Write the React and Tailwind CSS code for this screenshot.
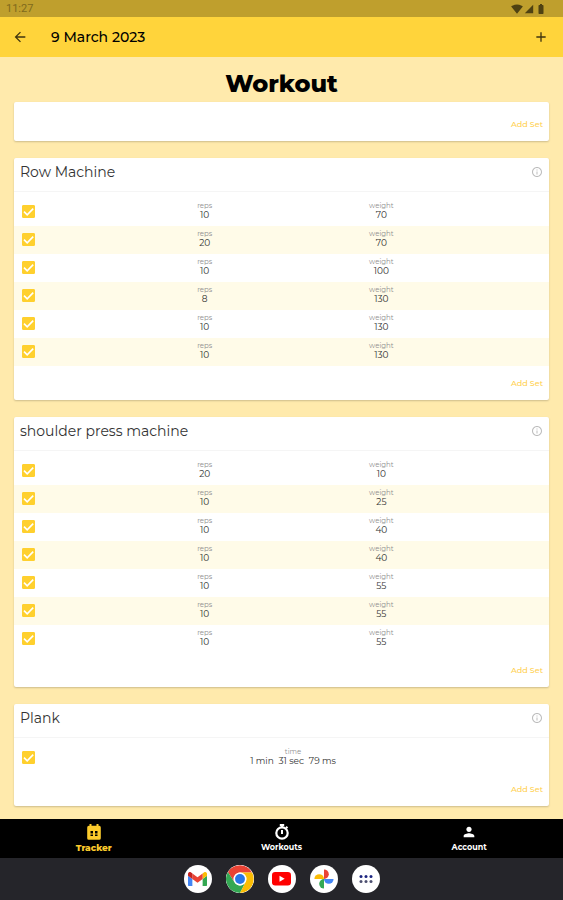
import {useState} from "react";
import {
    MdAdd,
    MdArrowBack,
    MdBatteryFull,
    MdInfoOutline,
    MdPerson,
    MdSignalCellular4Bar,
    MdSignalWifi4Bar,
} from "react-icons/md";

const rowMachineSets = [
    {reps: 10, weight: 70},
    {reps: 20, weight: 70},
    {reps: 10, weight: 100},
    {reps: 8, weight: 130},
    {reps: 10, weight: 130},
    {reps: 10, weight: 130},
];

const shoulderPressSets = [
    {reps: 20, weight: 10},
    {reps: 10, weight: 25},
    {reps: 10, weight: 40},
    {reps: 10, weight: 40},
    {reps: 10, weight: 55},
    {reps: 10, weight: 55},
    {reps: 10, weight: 55},
];

const plankSets = [{time: "1 min  31 sec  79 ms"}];

const StatusBar = () => (
    <div className="flex h-[17px] items-center justify-between bg-[#bf9f2d] pl-1.5 pr-4 text-[#4f4212]">
        <span className="font-['Roboto',sans-serif] text-[11px] leading-4 text-[#806a1c]">11:27</span>
        <div className="flex items-center gap-px">
            <MdSignalWifi4Bar className="size-3"/>
            <MdSignalCellular4Bar className="size-2.5"/>
            <MdBatteryFull className="size-3"/>
        </div>
    </div>
);

const Header = () => (
    <header className="flex h-10 items-center bg-[#ffd43b] px-3 text-black">
        <button type="button" aria-label="Back" className="flex size-4 items-center justify-center">
            <MdArrowBack className="size-4 opacity-75"/>
        </button>
        <div className="ml-[23px] flex-1 text-sm font-medium leading-5">9 March 2023</div>
        <button type="button" aria-label="Add exercise" className="mr-0.5 flex size-4 items-center justify-center">
            <MdAdd className="size-4 opacity-75"/>
        </button>
    </header>
);

const AddSet = () => (
    <div className="flex h-[34px] items-center justify-end px-1.5">
        <button type="button" className="text-[8px] font-medium leading-3 text-[#ffcf4d]">Add Set</button>
    </div>
);

const SetRow = ({set, name}) => {
    const [done, setDone] = useState(true);

    return (
        <li className="grid h-7 grid-cols-[102fr_352fr_79fr] items-center pb-0.5 even:bg-[#fffbe8]">
            <div className="relative ml-2 size-[13px]">
                <input
                    type="checkbox"
                    aria-label={name}
                    checked={done}
                    onChange={(e) => setDone(e.target.checked)}
                    className="peer block size-[13px] appearance-none rounded-[1px] border border-[#ffd02e] checked:bg-[#ffd02e]"
                />
                <svg viewBox="0 0 13 13" className="pointer-events-none absolute inset-0 hidden size-[13px] peer-checked:block">
                    <path d="M2 6.600l3.200 3.200 6-6.200" fill="none" stroke="#fff" strokeWidth="1.600"/>
                </svg>
            </div>
            <div className="flex">
                {
                    Object.entries(set).map(([label, value]) => (
                        <div key={label} className="flex-1 text-center">
                            <div className="text-[7px] leading-2 text-[#8f8f8f]">{label}</div>
                            <div className="whitespace-pre text-[9px] leading-[10px] text-[#333333]">{value}</div>
                        </div>
                    ))
                }
            </div>
        </li>
    );
};

const ExerciseCard = ({title, sets}) => (
    <section className="rounded-xs bg-white shadow-[0_1px_2px_rgba(0,0,0,0.2)]">
        <div className="flex h-[34px] items-start justify-between border-b border-[#f5f5f5] px-1.5 pt-1">
            <h2 className="text-sm leading-5 text-[#333333]">{title}</h2>
            <button type="button" aria-label={`About ${title}`} className="mt-1">
                <MdInfoOutline className="size-3 text-[#bdbdbd]"/>
            </button>
        </div>
        <ul className="pt-1.5">
            {
                sets.map((set, i) => (
                    <SetRow key={i} set={set} name={`${title} set ${i + 1}`}/>
                ))
            }
        </ul>
        <AddSet/>
    </section>
);

const CalendarIcon = () => (
    <svg viewBox="0 0 16 16" className="size-4" fill="currentColor">
        <path fillRule="evenodd" d="M3.500 0h2v1.800h5V0h2v1.800h.7a1.600 1.600 0 0 1 1.600 1.600v10.800a1.600 1.600 0 0 1-1.600 1.600H2.800a1.600 1.600 0 0 1-1.600-1.600V3.400a1.600 1.600 0 0 1 1.600-1.600h.7zM4.500 7v2.500H7V7zm4.500 0v2.500h2.500V7zM4.500 10.500V12H7v-1.500zm4.500 0V12h2.500v-1.500z"/>
    </svg>
);

const StopwatchIcon = () => (
    <svg viewBox="0 0 16 16" className="size-4" fill="none" stroke="currentColor">
        <circle cx="8" cy="9" r="5.700" strokeWidth="2.200"/>
        <path d="M5.800 1.200h4.400M8 1v2.500M12 4l1.500-1.200" strokeWidth="2.200"/>
        <path d="M8 6v4" strokeWidth="2"/>
    </svg>
);

const NavLink = ({label, active, children}) => (
    <a
        href="#"
        className={`${active ? "text-[9px] font-extrabold text-[#fccb2c]" : "text-[8px] font-bold text-white"} flex flex-1 flex-col items-center pt-[5px] leading-[15px]`}
    >
        {children}
        {label}
    </a>
);

const DockButton = ({label, children}) => (
    <button type="button" aria-label={label} className="flex size-7 items-center justify-center overflow-hidden rounded-full bg-white">
        {children}
    </button>
);

const Dock = () => (
    <div className="flex h-[42px] items-center justify-center gap-3.5 bg-[#25252a]">
        <DockButton label="Gmail">
            <svg viewBox="0 0 24 18" className="w-[19px]">
                <path fill="#4285f4" d="M1.600 18h3.900V8.700L0 4.600v11.800A1.600 1.600 0 0 0 1.600 18z"/>
                <path fill="#34a853" d="M18.500 18h3.900a1.600 1.600 0 0 0 1.600-1.600V4.600l-5.500 4.100z"/>
                <path fill="#fbbc04" d="M18.500 1.800v6.900L24 4.600V2.400C24 .4 21.700-.8 20 .5z"/>
                <path fill="#ea4335" d="M5.500 8.700V1.800L12 6.600l6.500-4.800v6.900L12 13.600z"/>
                <path fill="#c5221f" d="M0 2.400v2.200l5.500 4.100V1.800L4 .5C2.300-.8 0 .4 0 2.400z"/>
            </svg>
        </DockButton>
        <DockButton label="Chrome">
            <svg viewBox="0 0 48 48" className="size-7">
                <circle cx="24" cy="24" r="24" fill="#fff"/>
                <path fill="#ea4335" d="M24 13h20.800A24 24 0 0 0 3.200 12l11.300 17.500A11 11 0 0 1 24 13z"/>
                <path fill="#34a853" d="M14.500 29.500 3.200 12A24 24 0 0 0 24 48l9.500-18.500a11 11 0 0 1-19 0z"/>
                <path fill="#fbbc04" d="M33.500 29.500 24 48A24 24 0 0 0 44.800 13H24a11 11 0 0 1 9.500 16.500z"/>
                <circle cx="24" cy="24" r="11" fill="#fff"/>
                <circle cx="24" cy="24" r="8.500" fill="#2877e8"/>
            </svg>
        </DockButton>
        <DockButton label="YouTube">
            <svg viewBox="0 0 24 17" className="w-[19px]">
                <rect width="24" height="17" rx="4" fill="#f00"/>
                <path d="M9.500 4.800v7.400l6.500-3.700z" fill="#fff"/>
            </svg>
        </DockButton>
        <DockButton label="Photos">
            <svg viewBox="0 0 24 24" className="size-5">
                <path fill="#ea4335" d="M12 .5a5.750 5.750 0 0 1 0 11.500z"/>
                <path fill="#4285f4" d="M23.500 12a5.750 5.750 0 0 1-11.500 0z"/>
                <path fill="#34a853" d="M12 23.500a5.750 5.750 0 0 1 0-11.500z"/>
                <path fill="#fbbc04" d="M.5 12a5.750 5.750 0 0 1 11.500 0z"/>
            </svg>
        </DockButton>
        <DockButton label="All apps">
            <svg viewBox="0 0 14 10" className="w-3.5">
                <g fill="#1c2480">
                    <circle cx="2" cy="2.500" r="1.500"/>
                    <circle cx="7" cy="2.500" r="1.500"/>
                    <circle cx="12" cy="2.500" r="1.500"/>
                </g>
                <g fill="#4c4f70">
                    <circle cx="2" cy="7.500" r="1.500"/>
                    <circle cx="7" cy="7.500" r="1.500"/>
                    <circle cx="12" cy="7.500" r="1.500"/>
                </g>
            </svg>
        </DockButton>
    </div>
);

const App = () => {
    return (
        <div className="flex min-h-screen flex-col bg-[#ffeaac] font-['Montserrat','Inter',sans-serif]">
            <StatusBar/>
            <Header/>
            <main className="flex-1 px-3.5 pb-[13px]">
                <h1 className="flex h-[45px] items-center justify-center pt-2 text-2xl font-extrabold leading-8 text-black">Workout</h1>
                <div className="flex flex-col gap-[17px]">
                    <section className="rounded-xs bg-white pt-[5px] shadow-[0_1px_2px_rgba(0,0,0,0.2)]">
                        <AddSet/>
                    </section>
                    <ExerciseCard title="Row Machine" sets={rowMachineSets}/>
                    <ExerciseCard title="shoulder press machine" sets={shoulderPressSets}/>
                    <ExerciseCard title="Plank" sets={plankSets}/>
                </div>
            </main>
            <nav className="flex h-[39px] bg-black">
                <NavLink label="Tracker" active><CalendarIcon/></NavLink>
                <NavLink label="Workouts"><StopwatchIcon/></NavLink>
                <NavLink label="Account"><MdPerson className="size-4"/></NavLink>
            </nav>
            <Dock/>
        </div>
    );
};

export default App;
